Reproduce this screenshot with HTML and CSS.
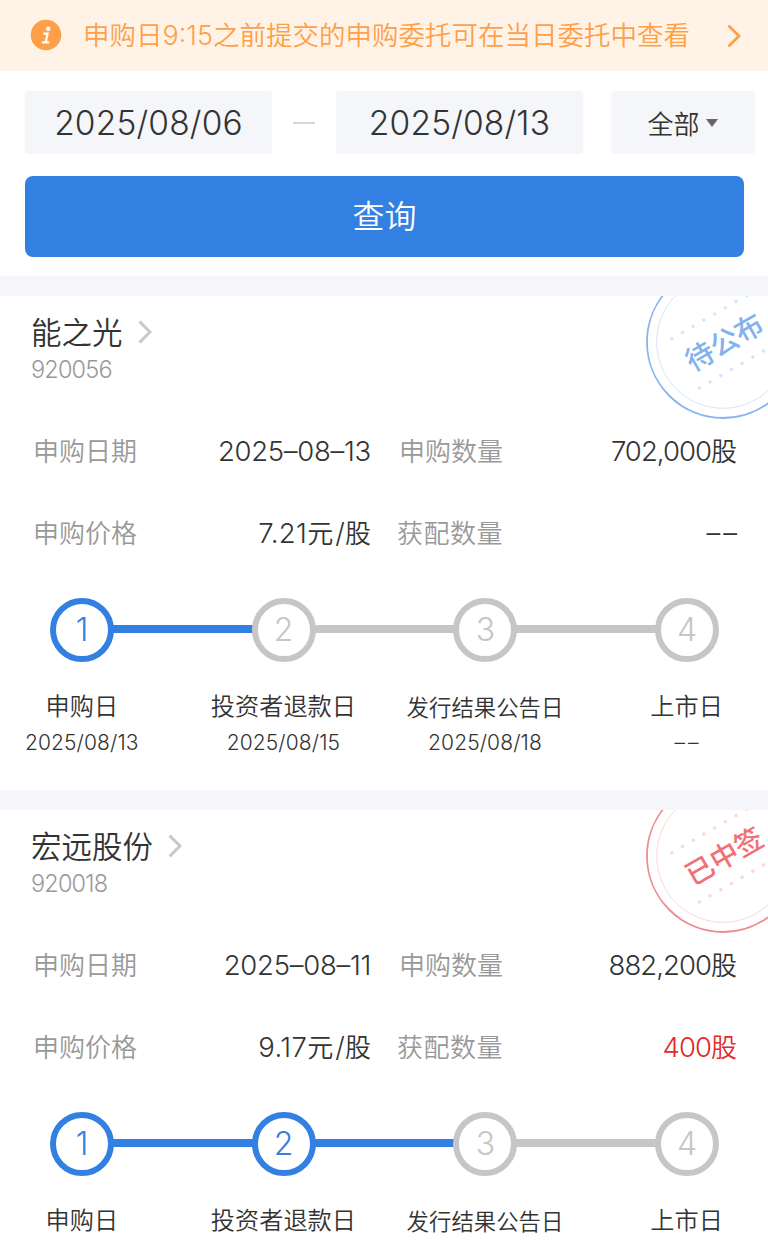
FILE: index.html
```html
<!DOCTYPE html>
<html lang="zh-CN">
	<head>
		<meta charset="utf-8">
		<title>申购查询</title>
		<link rel="stylesheet" href="styles.css">
	</head>
	<body>

		<!-- 提示 -->
		<div class="notice">
			<svg class="noticeIcon" viewBox="0 0 32 32">
				<circle cx="16" cy="16" r="15.3" fill="#ff9f48"/>
				<circle cx="18.2" cy="9.8" r="2.3" fill="#fff"/>
				<path d="M13.4 14.6H17.6L15.8 22.8M11.8 23.3H19.2" fill="none" stroke="#fff" stroke-width="2.2"/>
			</svg>
			<span class="noticeText">申购日<span class="num">9:15</span>之前提交的申购委托可在当日委托中查看</span>
			<svg class="noticeArrow" viewBox="0 0 14 24"><path d="M1.4 1.4L12 12L1.4 22.6"/></svg>
		</div>

		<!-- 查询条件 -->
		<div class="filter">
			<div class="filterRow">
				<div class="dateNode num">2025/08/06</div>
				<div class="dashNode"></div>
				<div class="dateNode num">2025/08/13</div>
				<div class="typeNode">全部<i class="caret"></i></div>
			</div>
			<div class="queryBtn">查询</div>
		</div>

		<div class="card">
			<svg class="stamp stampBlue" viewBox="0 0 156 156">
				<circle class="ring" cx="78" cy="78" r="76"/>
				<circle class="ringIn" cx="78" cy="78" r="66.3"/>
				<g transform="rotate(-30 78 78)">
					<path class="dots" d="M35.4 49.5H134M34.5 106H125"/>
					<text x="79" y="89" text-anchor="middle">待公布</text>
				</g>
			</svg>
			<div class="title">能之光<svg class="titleArrow" viewBox="0 0 14 24"><path d="M1.6 1.6L12 12L1.6 22.4"/></svg></div>
			<div class="code num">920056</div>
			<div class="info">
				<div class="item"><span class="label">申购日期</span><span class="value"><span class="num day">2025–08–13</span></span></div>
				<div class="item"><span class="label">申购数量</span><span class="value"><span class="num">702,000</span>股</span></div>
				<div class="item"><span class="label">申购价格</span><span class="value"><span class="num price">7.21</span>元<span class="num slash">/</span>股</span></div>
				<div class="item"><span class="label wide">获配数量</span><span class="value"><span class="num none">––</span></span></div>
			</div>
			<div class="rail">
				<div class="dot num on">1</div>
				<div class="line on"></div>
				<div class="dot num">2</div>
				<div class="line"></div>
				<div class="dot num">3</div>
				<div class="line"></div>
				<div class="dot num">4</div>
			</div>
			<div class="steps">
				<div class="step"><p class="name">申购日</p><p class="date num">2025/08/13</p></div>
				<div class="step"><p class="name">投资者退款日</p><p class="date num">2025/08/15</p></div>
				<div class="step"><p class="name small">发行结果公告日</p><p class="date num">2025/08/18</p></div>
				<div class="step"><p class="name">上市日</p><p class="date num none">––</p></div>
			</div>
		</div>

		<div class="card last">
			<svg class="stamp stampRed" viewBox="0 0 156 156">
				<circle class="ring" cx="78" cy="78" r="76"/>
				<circle class="ringIn" cx="78" cy="78" r="66.3"/>
				<g transform="rotate(-30 78 78)">
					<path class="dots" d="M35.4 49.5H134M34.5 106H125"/>
					<text x="79" y="89" text-anchor="middle">已中签</text>
				</g>
			</svg>
			<div class="title">宏远股份<svg class="titleArrow" viewBox="0 0 14 24"><path d="M1.6 1.6L12 12L1.6 22.4"/></svg></div>
			<div class="code num">920018</div>
			<div class="info">
				<div class="item"><span class="label">申购日期</span><span class="value"><span class="num day">2025–08–11</span></span></div>
				<div class="item"><span class="label">申购数量</span><span class="value"><span class="num">882,200</span>股</span></div>
				<div class="item"><span class="label">申购价格</span><span class="value"><span class="num price">9.17</span>元<span class="num slash">/</span>股</span></div>
				<div class="item"><span class="label wide">获配数量</span><span class="value red"><span class="num">400</span>股</span></div>
			</div>
			<div class="rail">
				<div class="dot num on">1</div>
				<div class="line on"></div>
				<div class="dot num on">2</div>
				<div class="line on"></div>
				<div class="dot num">3</div>
				<div class="line"></div>
				<div class="dot num">4</div>
			</div>
			<div class="steps">
				<div class="step"><p class="name">申购日</p></div>
				<div class="step"><p class="name">投资者退款日</p></div>
				<div class="step"><p class="name small">发行结果公告日</p></div>
				<div class="step"><p class="name">上市日</p></div>
			</div>
		</div>

	</body>
</html>
```

FILE: styles.css
```css
* {
	margin: 0;
	padding: 0;
	box-sizing: border-box;
}

body {
	width: 768px;
	height: 1247px;
	overflow: hidden;
	background: #fff;
	color: #333;
	font-family: "Noto Sans CJK SC", sans-serif;
	font-weight: 350;
	white-space: nowrap;
}

.num {
	font-family: Inter, "Noto Sans CJK SC", sans-serif;
	font-weight: 350;
	letter-spacing: -0.035em;
}

/* 提示 */
.notice {
	display: flex;
	align-items: center;
	height: 71px;
	padding: 0 27px 0 30px;
	background: #fff3e7;
	color: #ff9f48;
}

.noticeIcon {
	width: 32px;
	height: 32px;
	margin: 0 21px 2px 0;
}

.noticeText {
	flex: 1;
	padding-bottom: 2px;
	font-size: 26.5px;
	line-height: 40px;
}

.noticeText .num {
	font-size: 27px;
	letter-spacing: 0;
}

.noticeArrow {
	width: 14px;
	height: 24px;
	fill: none;
	stroke: #ff9f48;
	stroke-width: 2.8;
}

/* 查询条件 */
.filter {
	height: 225px;
	padding: 20px 13px 0 25px;
	border-bottom: 20px solid #f5f6f9;
}

.filterRow {
	display: flex;
	align-items: center;
}

.dateNode {
	width: 247px;
	height: 63px;
	border-radius: 4px;
	background: #f5f6f9;
	font-size: 33.5px;
	line-height: 64px;
	letter-spacing: 0.005em;
	text-align: center;
}

.dashNode {
	width: 22px;
	height: 2px;
	margin: 1px 21px 0;
	background: #d5d6dc;
}

.typeNode {
	display: flex;
	align-items: center;
	justify-content: center;
	width: 144px;
	height: 63px;
	margin-left: 28px;
	padding-right: 1px;
	border-radius: 4px;
	background: #f5f6f9;
	font-size: 26px;
	line-height: 60px;
}

.typeNode .caret {
	margin-left: 6px;
	border: 6.5px solid transparent;
	border-top: 8px solid #666;
	border-bottom: 0;
}

.queryBtn {
	width: 719px;
	height: 81px;
	margin-top: 22px;
	border-radius: 8px;
	background: #3180e2;
	color: #fff;
	font-size: 32px;
	line-height: 77px;
	text-align: center;
}

/* 新股卡片 */
.card {
	position: relative;
	height: 514px;
	overflow: hidden;
	border-bottom: 20px solid #f5f6f9;
}

.last {
	height: 437px;
	border-bottom: 0;
}

.title {
	display: flex;
	align-items: center;
	padding: 12px 0 0 31px;
	font-size: 30.5px;
	line-height: 46px;
}

.titleArrow {
	width: 14px;
	height: 24px;
	margin: 2px 0 0 15px;
	fill: none;
	stroke: #c8c8c8;
	stroke-width: 3;
}

.code {
	padding: 2px 0 0 31px;
	color: #999;
	font-size: 23.5px;
	line-height: 27px;
}

.info {
	display: grid;
	grid-template-columns: 338px 338px;
	grid-auto-rows: 82px;
	column-gap: 28px;
	margin: 25px 0 0 33px;
}

.item {
	display: flex;
	align-items: center;
	justify-content: space-between;
	font-size: 26px;
}

.label {
	color: #999;
}

.item .wide {
	margin-left: -2px;
	letter-spacing: 0.5px;
}

.value .num {
	font-size: 27.5px;
}

.value .day {
	letter-spacing: -0.01em;
}

.value .price {
	letter-spacing: 0.015em;
}

.value .slash {
	padding: 0 1px 0 2px;
}

.red {
	color: #e22b2b;
}

.rail {
	display: flex;
	align-items: center;
	margin-top: 26px;
	padding: 0 49px 0 50px;
}

.dot {
	width: 64px;
	height: 64px;
	border: 6px solid #c6c6c6;
	border-radius: 50%;
	color: #c6c6c6;
	font-size: 32px;
	font-weight: 300;
	line-height: 52px;
	letter-spacing: 0;
	text-align: center;
}

.line {
	flex: 1;
	height: 8px;
	margin: 0 -1px 2px;
	background: #c6c6c6;
}

.dot.on {
	border-color: #3180e2;
	color: #3180e2;
}

.line.on {
	background: #3180e2;
}

.steps {
	display: grid;
	grid-template-columns: repeat(4, 201.6px);
	margin: 24px 0 0 -19px;
	text-align: center;
}

.name {
	height: 39px;
	font-size: 24.2px;
	line-height: 38px;
}

.name.small {
	font-size: 22.4px;
	line-height: 40px;
}

.date {
	font-size: 21px;
	line-height: 36px;
	letter-spacing: 0.005em;
}

.num.none {
	margin-right: -3px;
	letter-spacing: 3px;
}

/* 印章 */
.stamp {
	position: absolute;
	top: -32px;
	right: -33px;
	width: 156px;
	height: 156px;
	fill: none;
}

.stamp text {
	font-size: 28.2px;
	font-weight: 500;
}

.ring {
	stroke-width: 1.8;
}

.ringIn {
	stroke-width: 1;
	opacity: 0.35;
}

.dots {
	stroke-width: 3.4;
	stroke-linecap: round;
	stroke-dasharray: 0 12.35;
	opacity: 0.35;
}

.stampBlue {
	stroke: #86b4ef;
}

.stampRed {
	stroke: #f28b8f;
}

.stampBlue text {
	fill: #82b1ef;
	stroke: none;
}

.stampRed text {
	fill: #f07076;
	stroke: none;
}
```
